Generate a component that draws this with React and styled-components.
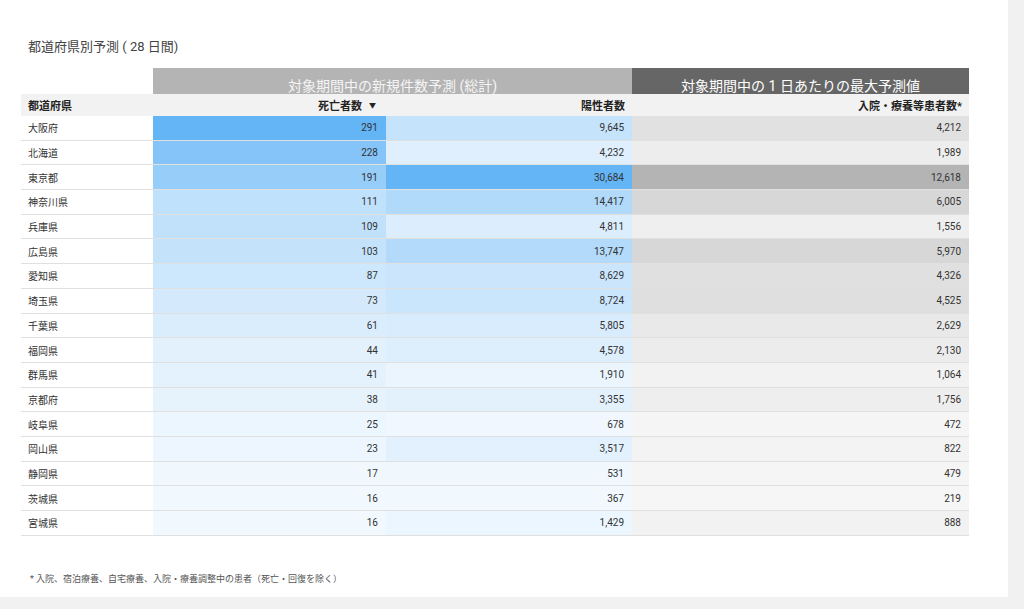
import React from "react";
import styled, { createGlobalStyle } from "styled-components";

const G = createGlobalStyle`
  body { margin:0; background:#f1f1f1; font-family: Roboto, "Noto Sans CJK JP", sans-serif; }
`;
const Card = styled.div`
  width:1008px; height:597px; background:#fff; box-sizing:border-box; padding:36px 21px 0 28px;
`;
const Title = styled.div`font-size:13px; color:#444; height:32px;`;
const Table = styled.div`
  display:grid; grid-template-columns:132px 233px 246px 337px; margin-left:-7px;
`;
const Group = styled.div`
  grid-column:${p=>p.span}; background:${p=>p.bg}; color:${p=>p.fg};
  height:26px; display:flex; align-items:flex-end; justify-content:center; font-size:14px; line-height:15px;
`;
const Head = styled.div`
  background:#f2f2f2; height:22px; display:flex; align-items:center; font-size:11px; font-weight:bold; color:#222;
  justify-content:${p=>p.left?"flex-start":"flex-end"};
  ${p=>p.left?"padding-left:7px;":"padding-right:7px;"}
`;
const Arrow = styled.span`font-size:7px; margin:0 3px 0 7px;`;
const Cell = styled.div`
  height:24.7px; box-sizing:border-box; border-bottom:1px solid #e0e0e0; display:flex; align-items:center;
  font-size:10px; color:#333; background:${p=>p.bg||"#fff"};
  justify-content:${p=>p.left?"flex-start":"flex-end"};
  ${p=>p.left?"padding-left:7px;":"padding-right:8px;"}
`;
const Foot = styled.div`font-size:9px; color:#555; margin-top:36px; margin-left:2px;`;

const data = [
["大阪府",291,9645,4212],["北海道",228,4232,1989],["東京都",191,30684,12618],["神奈川県",111,14417,6005],
["兵庫県",109,4811,1556],["広島県",103,13747,5970],["愛知県",87,8629,4326],["埼玉県",73,8724,4525],
["千葉県",61,5805,2629],["福岡県",44,4578,2130],["群馬県",41,1910,1064],["京都府",38,3355,1756],
["岐阜県",25,678,472],["岡山県",23,3517,822],["静岡県",17,531,479],["茨城県",16,367,219],["宮城県",16,1429,888]];
const f = n => n.toLocaleString("en-US");
const lerp=(a,b,t)=>a.map((x,i)=>Math.round(x+(b[i]-x)*t));
const rgb=c=>`rgb(${c.join(",")})`;
const blue=(v,mn,mx)=>rgb(lerp([241,248,254],[100,181,246],(v-mn)/(mx-mn)));
const grey=(v,mn,mx)=>rgb(lerp([246,246,246],[180,180,180],(v-mn)/(mx-mn)));

export default function App(){
  return <><G/><Card>
    <Title>都道府県別予測 ( 28 日間)</Title>
    <Table>
      <div/>
      <Group span="2 / span 2" bg="#b4b4b4" fg="#f5f5f5">対象期間中の新規件数予測 (総計)</Group>
      <Group span="4" bg="#666" fg="#fff">対象期間中の 1 日あたりの最大予測値</Group>
      <Head left>都道府県</Head>
      <Head>死亡者数<Arrow>▼</Arrow></Head>
      <Head>陽性者数</Head>
      <Head>入院・療養等患者数*</Head>
      {data.map(r=><React.Fragment key={r[0]}>
        <Cell left>{r[0]}</Cell>
        <Cell bg={blue(r[1],16,291)}>{f(r[1])}</Cell>
        <Cell bg={blue(r[2],367,30684)}>{f(r[2])}</Cell>
        <Cell bg={grey(r[3],219,12618)}>{f(r[3])}</Cell>
      </React.Fragment>)}
    </Table>
    <Foot>* 入院、宿泊療養、自宅療養、入院・療養調整中の患者（死亡・回復を除く）</Foot>
  </Card></>;
}
